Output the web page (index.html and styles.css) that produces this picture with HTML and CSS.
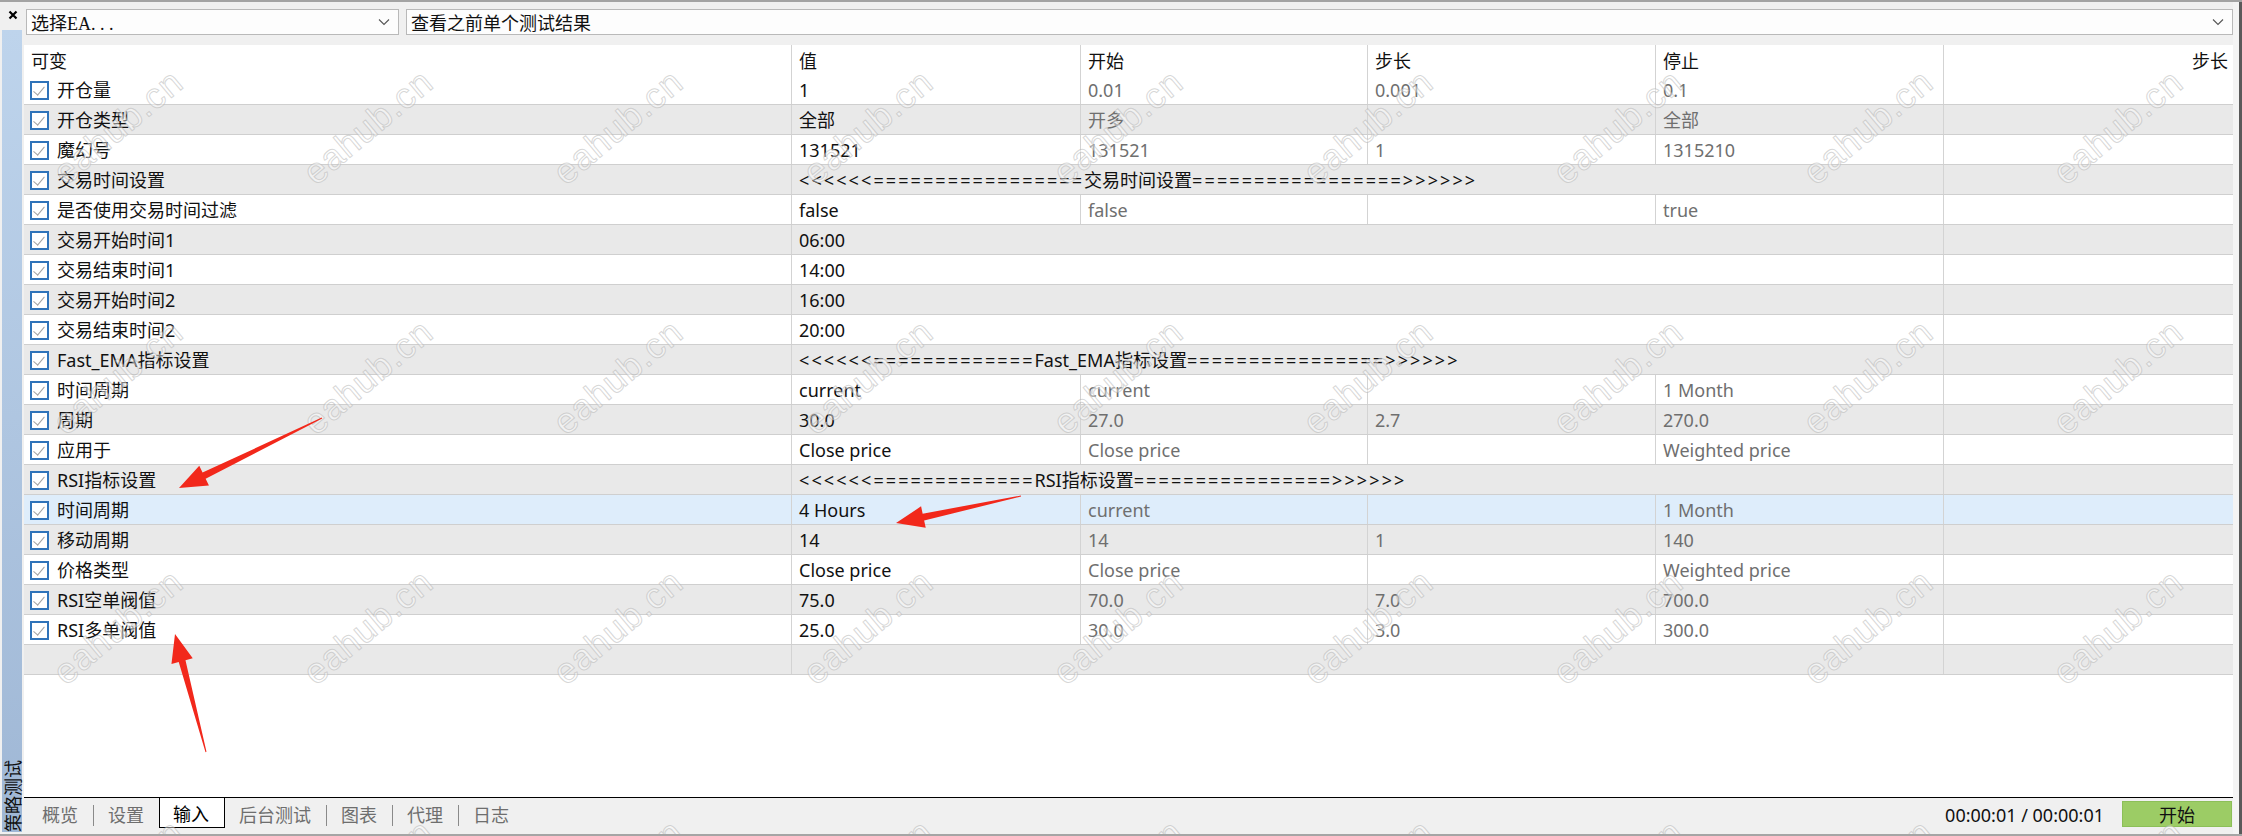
FILE: index.html
```html
<!DOCTYPE html>
<html lang="zh-CN">
<head>
<meta charset="utf-8">
<title>策略测试</title>
<link rel="stylesheet" href="styles.css">
</head>
<body>
<div class="window">
  <div class="frame">
    <div class="left">
      <div class="close">
        <svg width="10" height="10" viewBox="0 0 10 10"><path d="M1.5 1.5 L8.5 8.5 M8.5 1.5 L1.5 8.5" stroke="#000" stroke-width="2.2" fill="none"/></svg>
      </div>
      <div class="sidebar"><span class="side-text">策略测试</span></div>
    </div>
    <div class="main">
      <div class="toolbar">
        <div class="combo combo-ea"><span>选择EA. . .</span><svg class="chev" width="12" height="8" viewBox="0 0 12 8"><path d="M1 1.5 L6 6.5 L11 1.5" stroke="#555" stroke-width="1.1" fill="none"/></svg></div>
        <div class="combo combo-res"><span>查看之前单个测试结果</span><svg class="chev" width="12" height="8" viewBox="0 0 12 8"><path d="M1 1.5 L6 6.5 L11 1.5" stroke="#555" stroke-width="1.1" fill="none"/></svg></div>
      </div>
      <div class="table">
        <div class="row head">
          <div class="cell c1">可变</div>
          <div class="cell">值</div>
          <div class="cell">开始</div>
          <div class="cell">步长</div>
          <div class="cell">停止</div>
          <div class="cell last ralign">步长</div>
        </div>

        <div class="row">
          <div class="cell c1"><i class="cb"></i>开仓量</div>
          <div class="cell v">1</div><div class="cell g">0.01</div><div class="cell g">0.001</div><div class="cell g">0.1</div><div class="cell last"></div>
        </div>
        <div class="row alt">
          <div class="cell c1"><i class="cb"></i>开仓类型</div>
          <div class="cell v">全部</div><div class="cell g">开多</div><div class="cell g"></div><div class="cell g">全部</div><div class="cell last"></div>
        </div>
        <div class="row">
          <div class="cell c1"><i class="cb"></i>魔幻号</div>
          <div class="cell v">131521</div><div class="cell g">131521</div><div class="cell g">1</div><div class="cell g">1315210</div><div class="cell last"></div>
        </div>
        <div class="row alt">
          <div class="cell c1"><i class="cb"></i>交易时间设置</div>
          <div class="cell v span"><span class="eq">&lt;&lt;&lt;&lt;&lt;&lt;=================</span>交易时间设置<span class="eq">=================&gt;&gt;&gt;&gt;&gt;&gt;</span></div><div class="cell last"></div>
        </div>
        <div class="row">
          <div class="cell c1"><i class="cb"></i>是否使用交易时间过滤</div>
          <div class="cell v">false</div><div class="cell g">false</div><div class="cell g"></div><div class="cell g">true</div><div class="cell last"></div>
        </div>
        <div class="row alt">
          <div class="cell c1"><i class="cb"></i>交易开始时间1</div>
          <div class="cell v span">06:00</div><div class="cell last"></div>
        </div>
        <div class="row">
          <div class="cell c1"><i class="cb"></i>交易结束时间1</div>
          <div class="cell v span">14:00</div><div class="cell last"></div>
        </div>
        <div class="row alt">
          <div class="cell c1"><i class="cb"></i>交易开始时间2</div>
          <div class="cell v span">16:00</div><div class="cell last"></div>
        </div>
        <div class="row">
          <div class="cell c1"><i class="cb"></i>交易结束时间2</div>
          <div class="cell v span">20:00</div><div class="cell last"></div>
        </div>
        <div class="row alt">
          <div class="cell c1"><i class="cb"></i>Fast_EMA指标设置</div>
          <div class="cell v span"><span class="eq">&lt;&lt;&lt;&lt;&lt;&lt;=============</span>Fast_EMA指标设置<span class="eq">================&gt;&gt;&gt;&gt;&gt;&gt;</span></div><div class="cell last"></div>
        </div>
        <div class="row">
          <div class="cell c1"><i class="cb"></i>时间周期</div>
          <div class="cell v">current</div><div class="cell g">current</div><div class="cell g"></div><div class="cell g">1 Month</div><div class="cell last"></div>
        </div>
        <div class="row alt">
          <div class="cell c1"><i class="cb"></i>周期</div>
          <div class="cell v">30.0</div><div class="cell g">27.0</div><div class="cell g">2.7</div><div class="cell g">270.0</div><div class="cell last"></div>
        </div>
        <div class="row">
          <div class="cell c1"><i class="cb"></i>应用于</div>
          <div class="cell v">Close price</div><div class="cell g">Close price</div><div class="cell g"></div><div class="cell g">Weighted price</div><div class="cell last"></div>
        </div>
        <div class="row alt">
          <div class="cell c1"><i class="cb"></i>RSI指标设置</div>
          <div class="cell v span"><span class="eq">&lt;&lt;&lt;&lt;&lt;&lt;=============</span>RSI指标设置<span class="eq">================&gt;&gt;&gt;&gt;&gt;&gt;</span></div><div class="cell last"></div>
        </div>
        <div class="row sel">
          <div class="cell c1"><i class="cb"></i>时间周期</div>
          <div class="cell v">4 Hours</div><div class="cell g">current</div><div class="cell g"></div><div class="cell g">1 Month</div><div class="cell last"></div>
        </div>
        <div class="row alt">
          <div class="cell c1"><i class="cb"></i>移动周期</div>
          <div class="cell v">14</div><div class="cell g">14</div><div class="cell g">1</div><div class="cell g">140</div><div class="cell last"></div>
        </div>
        <div class="row">
          <div class="cell c1"><i class="cb"></i>价格类型</div>
          <div class="cell v">Close price</div><div class="cell g">Close price</div><div class="cell g"></div><div class="cell g">Weighted price</div><div class="cell last"></div>
        </div>
        <div class="row alt">
          <div class="cell c1"><i class="cb"></i>RSI空单阀值</div>
          <div class="cell v">75.0</div><div class="cell g">70.0</div><div class="cell g">7.0</div><div class="cell g">700.0</div><div class="cell last"></div>
        </div>
        <div class="row">
          <div class="cell c1"><i class="cb"></i>RSI多单阀值</div>
          <div class="cell v">25.0</div><div class="cell g">30.0</div><div class="cell g">3.0</div><div class="cell g">300.0</div><div class="cell last"></div>
        </div>
        <div class="row alt">
          <div class="cell c1"></div>
          <div class="cell v span"></div><div class="cell last"></div>
        </div>
      </div>
      <div class="tabbar">
        <div class="tabs">
          <span class="tab">概览</span><span class="sep"></span>
          <span class="tab">设置</span>
          <span class="tab active">输入</span>
          <span class="tab">后台测试</span><span class="sep"></span>
          <span class="tab">图表</span><span class="sep"></span>
          <span class="tab">代理</span><span class="sep"></span>
          <span class="tab">日志</span>
        </div>
        <div class="status">
          <span class="time">00:00:01 / 00:00:01</span>
          <span class="start-btn">开始</span>
        </div>
      </div>
    </div>
    <div class="edge"></div>
  </div>

  <div class="wm-layer">
    <span>eahub.cn</span><span>eahub.cn</span><span>eahub.cn</span><span>eahub.cn</span><span>eahub.cn</span><span>eahub.cn</span><span>eahub.cn</span><span>eahub.cn</span><span>eahub.cn</span>
    <span>eahub.cn</span><span>eahub.cn</span><span>eahub.cn</span><span>eahub.cn</span><span>eahub.cn</span><span>eahub.cn</span><span>eahub.cn</span><span>eahub.cn</span><span>eahub.cn</span>
    <span>eahub.cn</span><span>eahub.cn</span><span>eahub.cn</span><span>eahub.cn</span><span>eahub.cn</span><span>eahub.cn</span><span>eahub.cn</span><span>eahub.cn</span><span>eahub.cn</span>
    <span>eahub.cn</span><span>eahub.cn</span><span>eahub.cn</span><span>eahub.cn</span><span>eahub.cn</span><span>eahub.cn</span><span>eahub.cn</span><span>eahub.cn</span><span>eahub.cn</span>
  </div>

  <svg class="arrows" width="2242" height="836" viewBox="0 0 2242 836">
    <polygon fill="#f2281b" points="321.8,417.55 202.56,472.56 199.26,465.82 179,488 208.94,485.58 205.64,478.84 322.2,418.45"/>
    <polygon fill="#f2281b" points="1020.9,495.5 922.66,513.68 921.08,506.35 896,523 925.72,527.85 924.14,520.52 1021.1,496.5"/>
    <polygon fill="#f2281b" points="206.48,751.87 185.48,660.21 192.74,658.31 175,634 171.46,663.89 178.72,661.99 205.52,752.13"/>
  </svg>
</div>
</body>
</html>
```

FILE: styles.css
```css
* { box-sizing: border-box; }

body {
  margin: 0;
  background: #f0f0f0;
  font-family: "Noto Sans", "Noto Sans CJK SC", sans-serif;
  font-size: 18px;
  color: #111;
}

.window {
  position: relative;
  width: 2242px;
  height: 836px;
  overflow: hidden;
  background: #f0f0f0;
  border-top: 2px solid #a3a3a3;
  border-bottom: 2px solid #a5a5a5;
  display: flex;
  flex-direction: column;
}

.frame {
  flex: 1;
  display: flex;
}

/* left strip */
.left {
  width: 24px;
  display: flex;
  flex-direction: column;
}
.close {
  height: 28px;
  display: flex;
  justify-content: center;
  align-items: center;
  padding-left: 2px;
  padding-bottom: 2px;
}
.sidebar {
  flex: 1;
  width: 20px;
  margin-left: 2px;
  margin-bottom: 2px;
  background: linear-gradient(#bed4ec, #9fb7d5);
  display: flex;
  flex-direction: column;
  justify-content: flex-end;
  align-items: center;
}
.side-text {
  writing-mode: vertical-rl;
  text-orientation: sideways;
  transform: rotate(180deg);
  font-family: "Noto Sans CJK SC", sans-serif;
  font-size: 18px;
  line-height: 20px;
  color: #111;
}

/* main */
.main {
  width: 2209px;
  display: flex;
  flex-direction: column;
  padding-top: 7px;
}
.toolbar {
  height: 26px;
  display: flex;
  gap: 7px;
  padding-left: 2px;
  margin-bottom: 10px;
}
.combo {
  height: 26px;
  background: #fdfdfd;
  border: 1px solid #b9b9b9;
  display: flex;
  align-items: center;
  justify-content: space-between;
  padding: 0 8px 0 4px;
  font-family: "Liberation Serif", "Noto Sans CJK SC", serif;
  font-size: 18px;
  color: #111;
}
.combo-ea { width: 373px; }
.combo-res { flex: 1; }
.chev { flex: none; }

/* table */
.table {
  height: 752px;
  background: #fff;
}
.row {
  height: 30px;
  display: grid;
  grid-template-columns: 768px 289px 287px 288px 288px 289px;
  border-bottom: 1px solid #cfcfcf;
}
.row.head { border-bottom: none; }
.row.alt { background: #e9e9e9; }
.row.sel { background: #deedfb; }

.cell {
  border-right: 1px solid #d3d3d3;
  display: flex;
  align-items: center;
  padding-left: 7px;
  padding-top: 1px;
  white-space: nowrap;
  overflow: hidden;
  line-height: 26px;
  min-width: 0;
}
.cell.c1 { padding-left: 6px; color: #111; }
.row.head .cell.c1 { padding-left: 7px; }
.cell.v { color: #111; }
.cell.g { color: #6f6f6f; }
.cell.span { grid-column: span 4; }
.cell.last { border-right: none; }
.cell.ralign {
  justify-content: flex-end;
  padding-left: 0;
  padding-right: 5px;
}

.eq { letter-spacing: 2.1px; }

.cb {
  flex: none;
  width: 19px;
  height: 19px;
  margin-right: 8px;
  border: 2px solid #2f73b9;
  background: #fff;
  position: relative;
}
.cb::after {
  content: "";
  position: absolute;
  left: 4px;
  top: 1px;
  width: 5px;
  height: 10px;
  border-right: 1.5px solid #a3a3a3;
  border-bottom: 1.5px solid #a3a3a3;
  transform: rotate(40deg);
}

/* tab bar */
.tabbar {
  height: 33px;
  border-top: 1px solid #000;
  display: flex;
  justify-content: space-between;
}
.tabs {
  display: flex;
  padding-left: 4px;
  height: 30px;
}
.tab {
  display: flex;
  align-items: center;
  padding: 1px 15px 0 14px;
  color: #6e6e6e;
  font-family: "Noto Sans CJK SC", sans-serif;
  font-size: 18px;
}
.tab.active {
  background: #fff;
  border: 1px solid #000;
  border-top: none;
  color: #000;
  padding-left: 13px;
}
.sep {
  width: 1px;
  height: 21px;
  margin-top: 7px;
  background: #8a8a8a;
}
.status {
  display: flex;
  align-items: flex-start;
}
.time {
  margin-top: 4px;
  height: 26px;
  display: flex;
  align-items: center;
  margin-right: 18px;
  color: #111;
}
.start-btn {
  margin-top: 3px;
  margin-right: 1px;
  width: 110px;
  height: 26px;
  background: #9ccc65;
  border: 1px solid #8cbf58;
  display: flex;
  align-items: center;
  justify-content: center;
  font-family: "Noto Sans CJK SC", sans-serif;
  color: #111;
}

.edge {
  width: 9px;
  border-right: 3px solid #5a5a5a;
  background: #f4f4f4;
}

/* overlays */
.wm-layer {
  position: absolute;
  left: -7px;
  top: 0;
  display: grid;
  grid-template-columns: repeat(9, 250px);
  grid-template-rows: repeat(4, 250px);
  pointer-events: none;
}
.wm-layer span {
  display: flex;
  align-items: center;
  justify-content: center;
  transform: rotate(-40deg);
  font-family: "Liberation Sans", sans-serif;
  font-size: 36px;
  letter-spacing: 1px;
  color: rgba(255, 255, 255, 0.45);
  -webkit-text-stroke: 1px rgba(175, 175, 175, 0.5);
}

.arrows {
  position: absolute;
  left: 0;
  top: -2px;
  pointer-events: none;
}
```
